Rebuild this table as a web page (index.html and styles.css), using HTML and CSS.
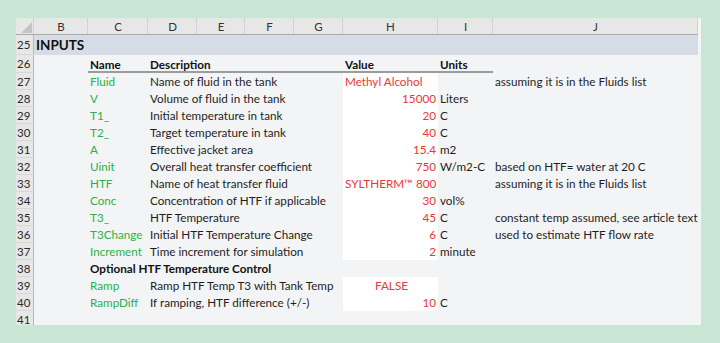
FILE: index.html
```html
<!DOCTYPE html>
<html>
<head>
<meta charset="utf-8">
<link rel="stylesheet" href="styles.css">
</head>
<body>
<div class="sheet">
<table class="grid">
<colgroup>
<col class="c-rh"><col class="c-b"><col class="c-c"><col class="c-d"><col class="c-e"><col class="c-f"><col class="c-g"><col class="c-h"><col class="c-i"><col class="c-j"><col class="c-k">
</colgroup>
<thead>
<tr class="hdr">
<th class="corner"><span class="tri"></span></th><th>B</th><th>C</th><th>D</th><th>E</th><th>F</th><th>G</th><th>H</th><th>I</th><th>J</th><th class="end"></th>
</tr>
</thead>
<tbody>
<tr class="r25"><th>25</th><td colspan="9" class="title">INPUTS</td><td class="blank"></td></tr>
<tr class="r26"><th>26</th><td></td><td class="ul b">Name</td><td colspan="4" class="ul b">Description</td><td class="ul b">Value</td><td class="ul b">Units</td><td></td><td></td></tr>
<tr><th>27</th><td></td><td class="g">Fluid</td><td colspan="4">Name of fluid in the tank</td><td class="v r l">Methyl Alcohol</td><td></td><td>assuming it is in the Fluids list</td><td></td></tr>
<tr><th>28</th><td></td><td class="g">V</td><td colspan="4">Volume of fluid in the tank</td><td class="v r n">15000</td><td>Liters</td><td></td><td></td></tr>
<tr><th>29</th><td></td><td class="g">T1_</td><td colspan="4">Initial temperature in tank</td><td class="v r n">20</td><td>C</td><td></td><td></td></tr>
<tr><th>30</th><td></td><td class="g">T2_</td><td colspan="4">Target temperature in tank</td><td class="v r n">40</td><td>C</td><td></td><td></td></tr>
<tr><th>31</th><td></td><td class="g">A</td><td colspan="4">Effective jacket area</td><td class="v r n">15.4</td><td>m2</td><td></td><td></td></tr>
<tr><th>32</th><td></td><td class="g">Uinit</td><td colspan="4">Overall heat transfer coefficient</td><td class="v r n">750</td><td>W/m2-C</td><td>based on HTF= water at 20 C</td><td></td></tr>
<tr><th>33</th><td></td><td class="g">HTF</td><td colspan="4">Name of heat transfer fluid</td><td class="v r l">SYLTHERM™ 800</td><td></td><td>assuming it is in the Fluids list</td><td></td></tr>
<tr><th>34</th><td></td><td class="g">Conc</td><td colspan="4">Concentration of HTF if applicable</td><td class="v r n">30</td><td>vol%</td><td></td><td></td></tr>
<tr><th>35</th><td></td><td class="g">T3_</td><td colspan="4">HTF Temperature</td><td class="v r n">45</td><td>C</td><td>constant temp assumed, see article text</td><td></td></tr>
<tr><th>36</th><td></td><td class="g">T3Change</td><td colspan="4">Initial HTF Temperature Change</td><td class="v r n">6</td><td>C</td><td>used to estimate HTF flow rate</td><td></td></tr>
<tr><th>37</th><td></td><td class="g">Increment</td><td colspan="4">Time increment for simulation</td><td class="v r n">2</td><td>minute</td><td></td><td></td></tr>
<tr><th>38</th><td></td><td colspan="5" class="b">Optional HTF Temperature Control</td><td></td><td></td><td></td><td></td></tr>
<tr><th>39</th><td></td><td class="g">Ramp</td><td colspan="4">Ramp HTF Temp T3 with Tank Temp</td><td class="v r c">FALSE</td><td></td><td></td><td></td></tr>
<tr><th>40</th><td></td><td class="g">RampDiff</td><td colspan="4">If ramping, HTF difference (+/-)</td><td class="v r n">10</td><td>C</td><td></td><td></td></tr>
<tr><th>41</th><td></td><td></td><td colspan="4"></td><td></td><td></td><td></td><td></td></tr>
</tbody>
</table>
</div>
</body>
</html>
```
FILE: styles.css
```css
html, body {
  margin: 0;
  padding: 0;
  background: #c8e6d3;
  width: 720px;
  height: 343px;
  overflow: hidden;
}
.sheet {
  margin: 18px 0 0 16px;
  width: 685px;
  height: 307px;
  overflow: hidden;
  background: #f3f4f6;
}
.grid {
  border-collapse: collapse;
  table-layout: fixed;
  width: 685px;
  font-family: "Lato", "Liberation Sans", sans-serif;
  font-size: 11.7px;
  color: #1e1e1e;
}
.c-rh { width: 18px; }
.c-b { width: 54px; }
.c-c { width: 60px; }
.c-d { width: 49px; }
.c-e { width: 48px; }
.c-f { width: 49px; }
.c-g { width: 49px; }
.c-h { width: 95px; }
.c-i { width: 55px; }
.c-j { width: 205px; }
.c-k { width: 3px; }
tr { height: 17px; }
td, th {
  padding: 0;
  border: none;
  height: 17px;
  white-space: nowrap;
  overflow: visible;
  line-height: 17px;
}
td { padding-left: 2px; }
.hdr, .hdr th { height: 17px; }
.hdr th {
  line-height: 17px;
  background: #e7e7e7;
  box-shadow: inset 0 -1px 0 #a9a9a9, inset -1px 0 0 #d2d2d2;
  font-weight: normal;
  color: #333;
  font-size: 11.5px;
  text-align: center;
}
.hdr th.end { background: #f3f4f6; box-shadow: none; }
.hdr .corner { position: relative; }
.tri {
  position: absolute;
  right: 2px;
  bottom: 2px;
  width: 0;
  height: 0;
  border-left: 11px solid transparent;
  border-bottom: 11px solid #c4c4c4;
}
tbody th {
  background: #e7e7e7;
  box-shadow: inset 0 -1px 0 #d8d8d8, inset -1px 0 0 #b8b8b8;
  font-weight: normal;
  text-align: left;
  padding-left: 1px;
  color: #2a2a2a;
  font-size: 11.5px;
}
.r25, .r25 th, .r25 td { height: 20px; line-height: 20px; }
.r25 td.title {
  background: #d5dce5;
  font-weight: bold;
  font-size: 13.5px;
  color: #111;
}
.r26, .r26 th, .r26 td { height: 18px; line-height: 18px; }
.ul { box-shadow: inset 0 -2px 0 #9c9c9c; }
.b { font-weight: bold; color: #111; }
.g { color: #2db04b; }
.v { background: #ffffff; }
.r { color: #f03535; }
.n { text-align: right; padding-right: 2px; }
.c { text-align: center; }
```
